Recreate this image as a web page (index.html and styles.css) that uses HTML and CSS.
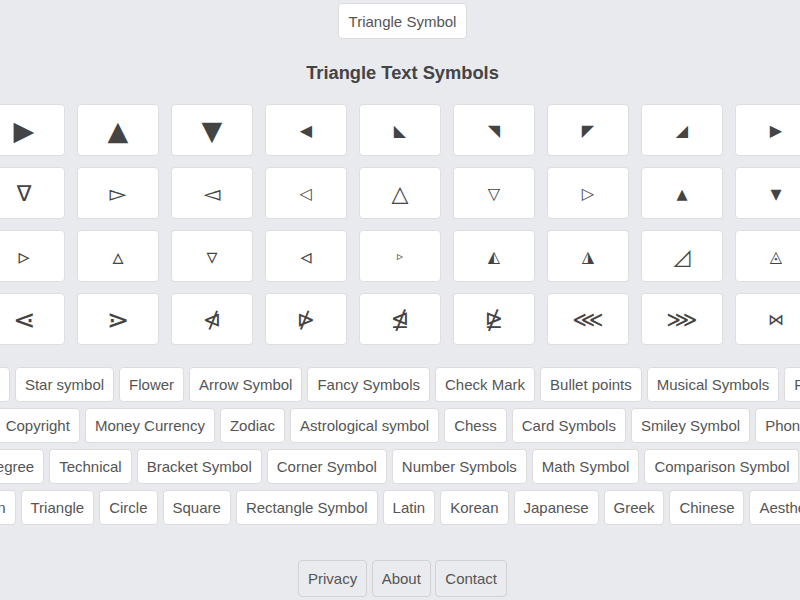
FILE: index.html
```html
<!DOCTYPE html>
<html lang="en">
<head>
<meta charset="utf-8">
<title>Triangle Text Symbols</title>
<link rel="stylesheet" href="styles.css">
</head>
<body>
<div class="page">
  <div class="top">
    <a class="btn top-btn" href="#">Triangle Symbol</a>
  </div>
  <h1 class="title">Triangle Text Symbols</h1>
  <div class="grid-wrap">
    <div class="grid">
      <div class="cell xl">▶</div><div class="cell xl">▲</div><div class="cell xl">▼</div><div class="cell sm">◀</div><div class="cell sm">◣</div><div class="cell sm">◥</div><div class="cell sm">◤</div><div class="cell sm">◢</div><div class="cell sm">▶</div>
      <div class="cell">∇</div><div class="cell">▻</div><div class="cell">◅</div><div class="cell sm">◁</div><div class="cell">△</div><div class="cell sm">▽</div><div class="cell sm">▷</div><div class="cell">▴</div><div class="cell">▾</div>
      <div class="cell">▹</div><div class="cell">▵</div><div class="cell">▿</div><div class="cell">◃</div><div class="cell xs">▹</div><div class="cell sm">◭</div><div class="cell sm">◮</div><div class="cell">◿</div><div class="cell sm">◬</div>
      <div class="cell xl">⋖</div><div class="cell xl">⋗</div><div class="cell">⋪</div><div class="cell">⋫</div><div class="cell">⋬</div><div class="cell">⋭</div><div class="cell">⋘</div><div class="cell">⋙</div><div class="cell sm">⋈</div>
    </div>
  </div>
  <div class="tags">
    <div class="tag-row">
      <a class="tag" href="#">Love Heart</a><a class="tag" href="#">Star symbol</a><a class="tag" href="#">Flower</a><a class="tag" href="#">Arrow Symbol</a><a class="tag" href="#">Fancy Symbols</a><a class="tag" href="#">Check Mark</a><a class="tag" href="#">Bullet points</a><a class="tag" href="#">Musical Symbols</a><a class="tag" href="#">Punctuation</a>
    </div>
    <div class="tag-row">
      <a class="tag" href="#">Happy</a><a class="tag" href="#">Copyright</a><a class="tag" href="#">Money Currency</a><a class="tag" href="#">Zodiac</a><a class="tag" href="#">Astrological symbol</a><a class="tag" href="#">Chess</a><a class="tag" href="#">Card Symbols</a><a class="tag" href="#">Smiley Symbol</a><a class="tag" href="#">Phone Symbol</a>
    </div>
    <div class="tag-row">
      <a class="tag" href="#">Dots</a><a class="tag" href="#">Degree</a><a class="tag" href="#">Technical</a><a class="tag" href="#">Bracket Symbol</a><a class="tag" href="#">Corner Symbol</a><a class="tag" href="#">Number Symbols</a><a class="tag" href="#">Math Symbol</a><a class="tag" href="#">Comparison Symbol</a><a class="tag" href="#">Weather</a>
    </div>
    <div class="tag-row">
      <a class="tag" href="#">Sun</a><a class="tag" href="#">Triangle</a><a class="tag" href="#">Circle</a><a class="tag" href="#">Square</a><a class="tag" href="#">Rectangle Symbol</a><a class="tag" href="#">Latin</a><a class="tag" href="#">Korean</a><a class="tag" href="#">Japanese</a><a class="tag" href="#">Greek</a><a class="tag" href="#">Chinese</a><a class="tag" href="#">Aesthetic</a>
    </div>
  </div>
  <div class="footer">
    <a class="foot-btn" href="#">Privacy</a><a class="foot-btn" href="#">About</a><a class="foot-btn" href="#">Contact</a>
  </div>
</div>
</body>
</html>
```
FILE: styles.css
```css
html, body {
  margin: 0;
  padding: 0;
}
body {
  background: #e9eaee;
  font-family: "Liberation Sans", Arial, sans-serif;
  color: #555;
  overflow: hidden;
  width: 800px;
  height: 600px;
}
a {
  text-decoration: none;
  color: #555;
}
.page {
  display: flex;
  flex-direction: column;
  align-items: center;
  padding-top: 3px;
}
.top {
  display: flex;
  justify-content: center;
  padding-left: 5px;
}
.btn {
  display: flex;
  align-items: center;
  height: 36px;
  box-sizing: border-box;
  padding: 0 10px;
  background: #fff;
  border: 1px solid #dcdcdc;
  border-radius: 4px;
  font-size: 15px;
}
.title {
  margin: 23px 0 21px;
  padding-left: 5px;
  font-size: 18.3px;
  line-height: 21px;
  font-weight: bold;
  color: #444;
}
.grid-wrap {
  width: 800px;
  display: flex;
  justify-content: center;
}
.grid {
  flex: none;
  display: grid;
  grid-template-columns: repeat(9, 82px);
  grid-auto-rows: 52px;
  column-gap: 12px;
  row-gap: 11px;
}
.cell {
  background: #fff;
  border: 1px solid #dedede;
  border-radius: 4px;
  display: flex;
  align-items: center;
  justify-content: center;
  font-family: "DejaVu Sans", sans-serif;
  font-size: 22px;
  color: #444;
}
.cell.xl {
  font-size: 27px;
}
.cell.sm {
  font-size: 16px;
}
.cell.xs {
  font-size: 12px;
}
.tags {
  margin-top: 22px;
  width: 800px;
  display: flex;
  flex-direction: column;
  gap: 6px;
}
.tag-row {
  display: flex;
  justify-content: center;
  gap: 5px;
  white-space: nowrap;
}
.tag {
  flex: none;
  height: 35px;
  box-sizing: border-box;
  display: flex;
  align-items: center;
  padding: 0 9px;
  background: #fff;
  border: 1px solid #dcdcdc;
  border-radius: 4px;
  font-size: 15px;
}
.footer {
  margin-top: 35px;
  padding-left: 5px;
  display: flex;
  gap: 4.5px;
}
.foot-btn {
  height: 37px;
  box-sizing: border-box;
  display: flex;
  align-items: center;
  padding: 0 9px;
  background: #eaebee;
  border: 1px solid #d2d2d4;
  border-radius: 4px;
  font-size: 15px;
}
```
